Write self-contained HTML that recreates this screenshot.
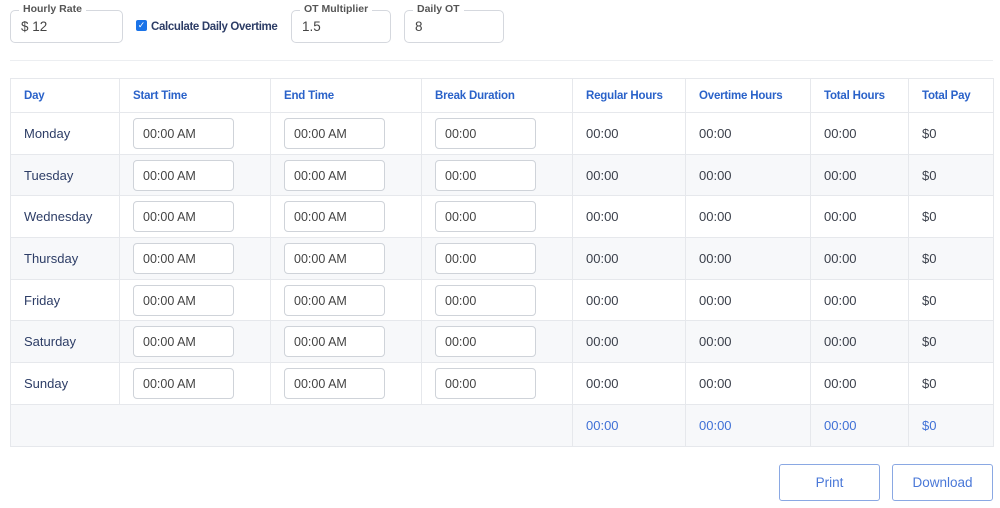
<!DOCTYPE html>
<html><head><style>
*{box-sizing:border-box;margin:0;padding:0}
body{width:1000px;height:508px;background:#fff;font-family:"Liberation Sans",sans-serif;position:relative;overflow:hidden;color:#333}
.fs{position:absolute;border:1px solid #d5d8de;border-radius:5px;height:33px;top:10px}
.fs .lg{position:absolute;top:-8px;left:8px;background:#fff;padding:0 4px;font-size:10.5px;font-weight:bold;color:#555}
.fs .v{position:absolute;left:10px;top:8px;font-size:13.5px;color:#444}
.hr{position:absolute;left:10px;width:983px;top:60px;border-top:1px solid #eceef1}
table{position:absolute;left:10px;top:78px;width:983px;border-collapse:collapse;table-layout:fixed}
td,th{border:1px solid #e6e8ec;text-align:left;padding:0 0 0 13px;font-size:13px;font-weight:normal}
th{height:34px;color:#2a62c9;font-weight:bold;font-size:11.5px;letter-spacing:-0.2px}
td{height:41.7px;color:#3a3f4a}
td.d{color:#2d3d66}
tr.s td{background:#f7f8fa}
.in{width:101px;height:31px;border:1px solid #cfd3d9;border-radius:4px;font-size:12.5px;color:#444;padding:8px 0 0 9px;background:#fff}
tr.t td{color:#3f70d6}
.btn{position:absolute;top:464px;height:37px;border:1px solid #8aa8e3;border-radius:3px;color:#4a78d8;font-size:13.5px;text-align:center;line-height:35px}
</style></head><body>
<div class="fs" style="left:10px;width:113px"><span class="lg">Hourly Rate</span><span class="v">$ 12</span></div>
<div style="position:absolute;left:136px;top:20px;width:11px;height:11px;background:#1a73e8;border-radius:2px;color:#fff;font-size:9px;line-height:11px;text-align:center">✓</div>
<div style="position:absolute;left:151px;top:21px;font-size:11.5px;font-weight:bold;color:#2d3d66;letter-spacing:-0.35px">Calculate Daily Overtime</div>
<div class="fs" style="left:291px;width:100px"><span class="lg">OT Multiplier</span><span class="v">1.5</span></div>
<div class="fs" style="left:404px;width:100px"><span class="lg">Daily OT</span><span class="v">8</span></div>
<div class="hr"></div>
<table>
<colgroup><col style="width:109px"><col style="width:151px"><col style="width:151px"><col style="width:151px"><col style="width:113px"><col style="width:125px"><col style="width:98px"><col style="width:85px"></colgroup>
<tr><th>Day</th><th>Start Time</th><th>End Time</th><th>Break Duration</th><th>Regular Hours</th><th>Overtime Hours</th><th>Total Hours</th><th>Total Pay</th></tr>
<tr><td class="d">Monday</td><td><div class="in">00:00 AM</div></td><td><div class="in">00:00 AM</div></td><td><div class="in">00:00</div></td><td>00:00</td><td>00:00</td><td>00:00</td><td>$0</td></tr>
<tr class="s"><td class="d">Tuesday</td><td><div class="in">00:00 AM</div></td><td><div class="in">00:00 AM</div></td><td><div class="in">00:00</div></td><td>00:00</td><td>00:00</td><td>00:00</td><td>$0</td></tr>
<tr><td class="d">Wednesday</td><td><div class="in">00:00 AM</div></td><td><div class="in">00:00 AM</div></td><td><div class="in">00:00</div></td><td>00:00</td><td>00:00</td><td>00:00</td><td>$0</td></tr>
<tr class="s"><td class="d">Thursday</td><td><div class="in">00:00 AM</div></td><td><div class="in">00:00 AM</div></td><td><div class="in">00:00</div></td><td>00:00</td><td>00:00</td><td>00:00</td><td>$0</td></tr>
<tr><td class="d">Friday</td><td><div class="in">00:00 AM</div></td><td><div class="in">00:00 AM</div></td><td><div class="in">00:00</div></td><td>00:00</td><td>00:00</td><td>00:00</td><td>$0</td></tr>
<tr class="s"><td class="d">Saturday</td><td><div class="in">00:00 AM</div></td><td><div class="in">00:00 AM</div></td><td><div class="in">00:00</div></td><td>00:00</td><td>00:00</td><td>00:00</td><td>$0</td></tr>
<tr><td class="d">Sunday</td><td><div class="in">00:00 AM</div></td><td><div class="in">00:00 AM</div></td><td><div class="in">00:00</div></td><td>00:00</td><td>00:00</td><td>00:00</td><td>$0</td></tr>
<tr class="s t"><td colspan="4" style="border-right:1px solid #e6e8ec"></td><td>00:00</td><td>00:00</td><td>00:00</td><td>$0</td></tr>
</table>
<div class="btn" style="left:779px;width:101px">Print</div>
<div class="btn" style="left:892px;width:101px">Download</div>
</body></html>
